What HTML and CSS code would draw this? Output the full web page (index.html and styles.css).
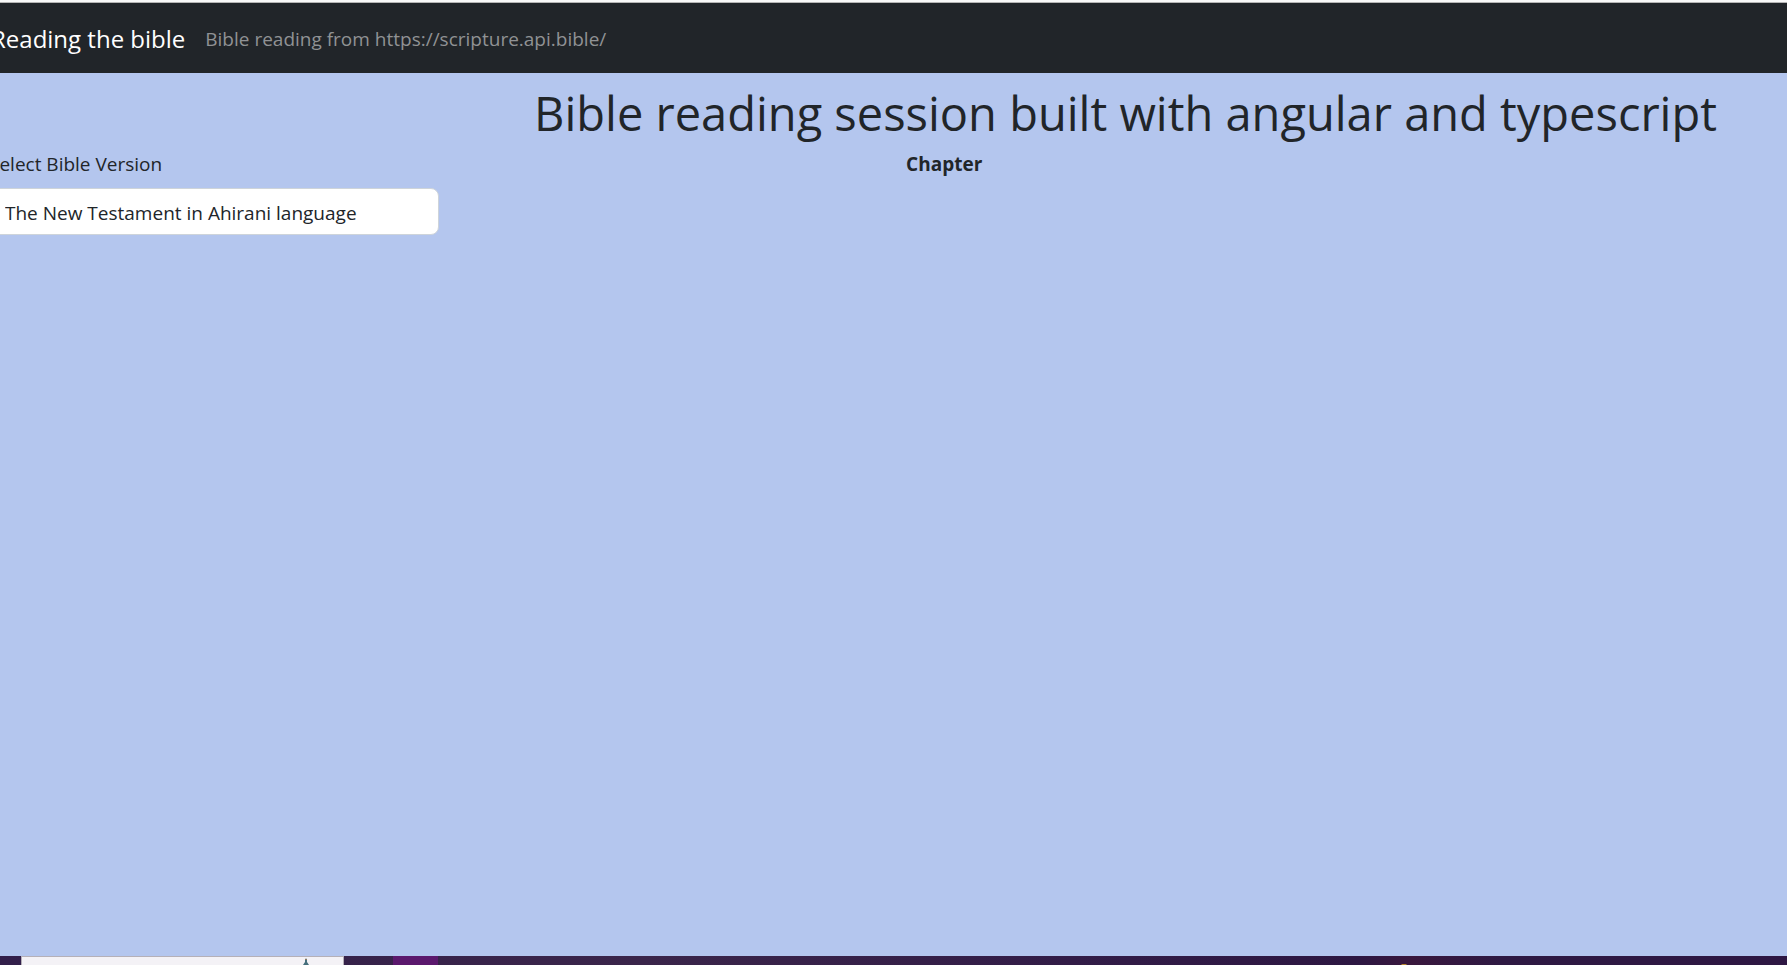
FILE: index.html
```html
<!DOCTYPE html>
<html lang="en">
<head>
<meta charset="utf-8">
<title>Reading the bible</title>
<link rel="stylesheet" href="styles.css">
</head>
<body>
<div class="screen">
  <nav class="navbar">
    <a class="brand" href="#">Reading the bible</a>
    <span class="nav-text">Bible reading from https://scripture.api.bible/</span>
  </nav>
  <main class="content">
    <h1 class="title">Bible reading session built with angular and typescript</h1>
    <div class="row">
      <div class="version">
        <label class="label" for="version">Select Bible Version</label>
        <select class="select" id="version">
          <option>The New Testament in Ahirani language</option>
        </select>
      </div>
      <strong class="chapter">Chapter</strong>
    </div>
  </main>
  <footer class="desktop">
    <div class="window">
      <svg class="tower" viewBox="0 0 6 7" aria-hidden="true"><path d="M3 0L4 2V4L6 7H0L2 4V2Z" fill="#456f7c"/><path d="M2 1h2v1H2z" fill="#8b7860"/></svg>
    </div>
    <div class="tile"></div>
    <svg class="glow" viewBox="0 0 6 1" aria-hidden="true"><path d="M0 1L1 0H5L6 1Z" fill="#b8862f"/></svg>
  </footer>
</div>
</body>
</html>
```
FILE: styles.css
```css
* { box-sizing: border-box; }

body {
  margin: 0;
  background: #b4c6ee;
  color: #212529;
  font-family: "Segoe UI", "Open Sans", "Noto Sans", sans-serif;
  font-size: 19px;
  line-height: 30px;
}

.screen {
  display: flex;
  flex-direction: column;
  min-height: 100vh;
  overflow: hidden;
  border-top: 2px solid #f8f8f8;
}

.navbar {
  display: flex;
  align-items: center;
  gap: 20px;
  min-height: 71px;
  margin-left: -9px;
  padding-top: 2px;
  border-top: 1px solid #b5b5b5;
  background: #212529;
}

.brand {
  color: #fff;
  font-size: 24px;
  text-decoration: none;
}

.nav-text { color: #909294; }

.content {
  flex: 1;
  margin-left: -11px;
  padding-top: 10px;
}

.title {
  margin: 0;
  padding-right: 70px;
  font-size: 47px;
  font-weight: 400;
  line-height: 60px;
  text-align: right;
}

.row {
  display: grid;
  grid-template-columns: 25% 1fr;
  padding-top: 6px;
}

.version {
  display: flex;
  flex-direction: column;
  gap: 9px;
}

.select {
  appearance: none;
  width: 100%;
  height: 47px;
  padding: 2px 15px 0;
  border: 1px solid #ced4da;
  border-radius: 8px;
  background: #fff;
  color: #212529;
  font: inherit;
}

.chapter {
  justify-self: center;
  margin-right: 25%;
  font-weight: 700;
}

.desktop {
  display: flex;
  height: 9px;
  background: linear-gradient(90deg, #321f4a, #3a254a 36%, #321c47 60%, #2d1742 76%, #39173d 79%, #2e1943 84%, #2e1743);
}

.window {
  flex: none;
  width: 323px;
  margin-left: 21px;
  padding: 1px 34px 0 0;
  border: 1px solid #b5b0b8;
  border-bottom: 0;
  background: #f4f2f6;
  text-align: right;
}

.tower {
  display: block;
  width: 6px;
  height: 7px;
  margin-left: auto;
}

.tile {
  flex: none;
  width: 45px;
  margin-left: 49px;
  background: #5b186d;
}

.glow {
  align-self: flex-end;
  width: 6px;
  height: 1px;
  margin-left: auto;
  margin-right: 380px;
}
```
